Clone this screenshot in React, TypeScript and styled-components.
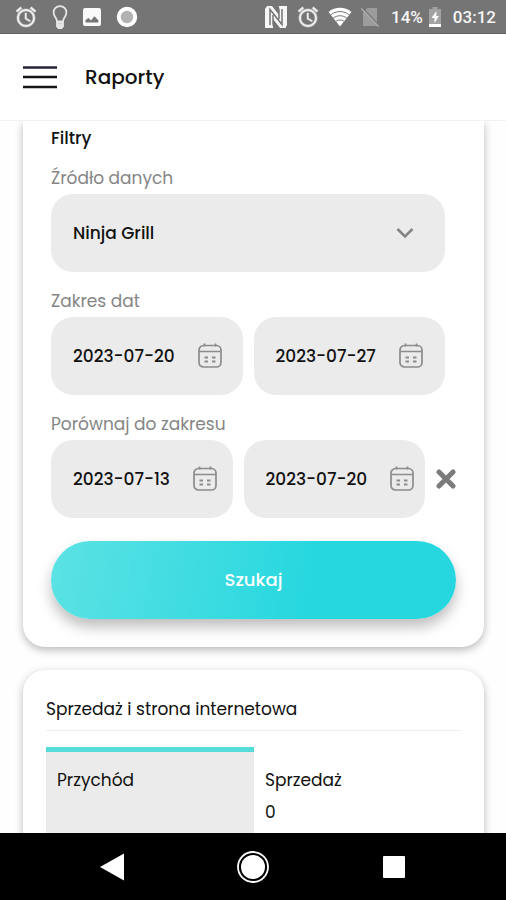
import React, { useState } from "react";
import styled, { createGlobalStyle } from "styled-components";

const GlobalStyle = createGlobalStyle`
  *, *::before, *::after { box-sizing: border-box; }
  body {
    margin: 0;
    background: #fefefe;
    color: #111;
    font-family: Poppins, Inter, "Liberation Sans", sans-serif;
    font-size: 17px;
    font-weight: 500;
    line-height: 24px;
  }
  button, input, select { font: inherit; color: inherit; }
`;

const Screen = styled.div`
  display: flex;
  flex-direction: column;
  height: 100vh;
`;

const StatusBar = styled.div`
  display: flex;
  flex: none;
  align-items: center;
  justify-content: space-between;
  height: 34px;
  padding: 0 10px 0 14px;
  background: #757575;
  border-bottom: 1px solid #636363;
  color: #f6f6f6;
  font-family: Roboto, sans-serif;
`;

const StatusGroup = styled.div<{ $gap: number }>`
  display: flex;
  align-items: center;
  gap: ${({ $gap }) => $gap}px;

  svg { display: block; flex: none; }
`;

const Header = styled.header`
  display: flex;
  flex: none;
  align-items: center;
  gap: 28px;
  height: 87px;
  padding: 0 23px;
  background: #fff;
  border-bottom: 1px solid #f2f2f2;
`;

const PageTitle = styled.h1`
  margin: 0;
  font-size: 20px;
  font-weight: 500;
`;

const IconButton = styled.button`
  display: flex;
  flex: none;
  align-items: center;
  justify-content: center;
  padding: 0;
  border: 0;
  background: none;
  cursor: pointer;

  svg { display: block; }
`;

const Content = styled.main`
  display: flex;
  flex: 1;
  flex-direction: column;
  gap: 23px;
  min-height: 0;
  padding: 0 22px 0 23px;
  overflow: hidden auto;
  scrollbar-width: none;
`;

const Card = styled.section`
  flex: none;
  border-radius: 22px;
  background: #fff;
  box-shadow: 0 3px 8px rgba(0, 0, 0, 0.28);
`;

const FilterCard = styled(Card)`
  padding: 5px 28px 28px;
  border-top-left-radius: 0;
  border-top-right-radius: 0;
`;

const ReportCard = styled(Card)`
  padding: 27px 22px 28px 23px;
`;

const FilterTitle = styled.h2`
  margin: 0 0 16px;
  font-size: 17px;
  font-weight: 500;
`;

const FieldGroup = styled.fieldset`
  min-width: 0;
  margin: 0 0 17px;
  padding: 0;
  border: 0;

  &:last-of-type { margin-bottom: 23px; }
`;

const caption = `
  display: block;
  margin-bottom: 4px;
  padding: 0;
  color: #858585;
  font-weight: 400;
`;
const Legend = styled.legend`${caption}`;
const Label = styled.label`${caption}`;

const FieldRow = styled.div<{ $inset?: boolean }>`
  display: flex;
  align-items: center;
  gap: 11px;
  padding-right: ${({ $inset }) => ($inset ? 11 : 0)}px;
`;

const SelectBox = styled.div`
  display: grid;
  flex: 1;
  align-items: center;
  height: 78px;
  border-radius: 22px;
  background: #ebebeb;

  > * { grid-area: 1 / 1; }
  svg {
    justify-self: end;
    margin-right: 30px;
    pointer-events: none;
  }
`;

const Select = styled.select`
  width: 100%;
  height: 100%;
  padding: 0 60px 0 22px;
  border: 0;
  border-radius: 22px;
  background: none;
  appearance: none;
`;

const DateBox = styled.div`
  display: flex;
  flex: 1 1 0;
  align-items: center;
  gap: 23px;
  min-width: 0;
  height: 78px;
  padding-left: 22px;
  border-radius: 22px;
  background: #ebebeb;
`;

const DateInput = styled.input`
  field-sizing: content;
  min-width: 0;
  padding: 0;
  border: 0;
  background: none;
`;

const SubmitButton = styled.button`
  display: block;
  width: 100%;
  height: 78px;
  border: 0;
  border-radius: 39px;
  background: linear-gradient(100deg, #5ce2e4 0%, #26d7df 65%);
  box-shadow: 0 8px 14px rgba(0, 0, 0, 0.26);
  color: #fff;
  font-size: 18px;
  cursor: pointer;
`;

const ReportTitle = styled.h2`
  margin: 0 0 16px;
  padding-bottom: 9px;
  border-bottom: 1px solid #efefef;
  font-size: 17px;
  font-weight: 400;
`;

const Metrics = styled.div`
  display: grid;
  grid-template-columns: 1fr 1fr;
`;

const Metric = styled.button<{ $active?: boolean }>`
  display: flex;
  flex-direction: column;
  gap: 8px;
  min-height: 108px;
  padding: 16px 11px;
  border: 0;
  border-top: 5px solid ${({ $active }) => ($active ? "#55dcd9" : "transparent")};
  background: ${({ $active }) => ($active ? "#ebebeb" : "none")};
  font-weight: 400;
  text-align: left;
  cursor: pointer;
`;

const NavBar = styled.nav`
  display: grid;
  flex: none;
  grid-template-columns: repeat(3, 1fr);
  height: 67px;
  padding: 0 42px;
  background: #000;
`;

const AlarmIcon = () => (
  <svg width="24" height="24" viewBox="0 0 24 24" fill="#ececec" stroke="#ececec" strokeWidth="0.5" aria-hidden="true">
    <path d="M22 5.72l-4.6-3.86-1.29 1.53 4.6 3.86L22 5.72zM7.88 3.39L6.6 1.86 2 5.71l1.29 1.53 4.59-3.85zM12.5 8H11v6l4.75 2.85.75-1.23-4-2.37V8zM12 4c-4.97 0-9 4.03-9 9s4.02 9 9 9c4.97 0 9-4.03 9-9s-4.03-9-9-9zm0 16c-3.87 0-7-3.13-7-7s3.13-7 7-7 7 3.13 7 7-3.13 7-7 7z" />
  </svg>
);

const BulbIcon = () => (
  <svg width="16" height="24" viewBox="0 0 16 24" fill="none" stroke="#e6e6e6" strokeWidth="1.8" aria-hidden="true">
    <path d="M5 16.5C5 13 1.6 11.5 1.6 7.5a6.4 6.4 0 0 1 12.8 0C14.4 11.500 11 13 11 16.500Z" />
    <path d="M5 17h6v4.500L9.500 23h-3L5 21.500ZM5 19.300h6M5.500 21.500h5" fill="#bbb" />
  </svg>
);

const PictureIcon = () => (
  <svg width="20" height="20" viewBox="0 0 20 20" aria-hidden="true">
    <rect x="1" y="1" width="18" height="18" rx="2" fill="#fafafa" />
    <path d="M3.500 15.500V13l3-2 2.500 2.600 3.400-4.400 3.900 4V15.500Z" fill="#757575" />
  </svg>
);

const RecordIcon = () => (
  <svg width="22" height="22" viewBox="0 0 22 22" aria-hidden="true">
    <circle cx="11" cy="11" r="8.200" fill="#b2b2b2" stroke="#fff" strokeWidth="4" />
  </svg>
);

const NfcIcon = () => (
  <svg width="24" height="24" viewBox="0 0 24 24" aria-hidden="true">
    <path d="M3 1h5l7 9V5l-1.500-4H23v19l-1.500 3H16L9 14v5l1.500 4H1V4Z" fill="#f7f7f7" />
    <path d="M6 20V4.500l12 15V4M10 23 9 19v-9M14 1l1 4v9" fill="none" stroke="#757575" strokeWidth="1.500" />
  </svg>
);

const WifiIcon = () => (
  <svg width="24" height="20" viewBox="0 0 24 20" aria-hidden="true">
    <path d="M12 19.500.5 5C7 -.6 17-.6 23.500 5Z" fill="#fff" />
    <path d="M2.500 8c5.500-4.600 13.500-4.600 19 0M5 11.300c4.200-3.400 9.800-3.400 14 0M7.600 14.500c2.800-2 6-2 8.800 0" fill="none" stroke="#757575" strokeWidth="1" />
  </svg>
);

const NoSimIcon = () => (
  <svg width="20" height="22" viewBox="0 0 20 22" aria-hidden="true">
    <path d="M7.500 2H17v18H3V6.500Z" fill="#9c9c9c" />
    <path d="M2 1.500 19 19.500" stroke="#757575" strokeWidth="1.500" />
    <path d="M1.200 2.500 18.500 20.500" stroke="#ababab" strokeWidth="1.500" />
  </svg>
);

const BatteryIcon = () => (
  <svg width="14" height="22" viewBox="0 0 14 22" aria-hidden="true">
    <path d="M4.500 1h5v2H13v18H1V3h3.500Z" fill="#a2a2a2" />
    <path d="M1 18h12v3H1Z" fill="#fff" />
    <path d="M8.300 5 3.500 12h3v5l4.500-7H8.300Z" fill="#fff" />
  </svg>
);

const MenuIcon = () => (
  <svg width="34" height="24" viewBox="0 0 34 24" fill="none" strokeWidth="2.500" aria-hidden="true">
    <path d="M0 2.500h34" stroke="#25253a" />
    <path d="M0 12h34M0 22h34" stroke="#151515" />
  </svg>
);

const ChevronIcon = () => (
  <svg width="20" height="20" viewBox="0 0 20 20" fill="none" stroke="#858585" strokeWidth="2.600" aria-hidden="true">
    <path d="m2.500 6 7.500 7.500L17.500 6" />
  </svg>
);

const CalendarIcon = () => (
  <svg width="24" height="26" viewBox="0 0 24 26" fill="none" stroke="#8c8c8c" strokeWidth="1.700" aria-hidden="true">
    <rect x="1" y="2.500" width="22" height="21.500" rx="4.500" />
    <path d="M1 8.500h22M6.500 .5v3M17.500 .5v3" />
    <path d="M6.500 14.500H10M14 14.500h3.500M6.500 18.500H10M14 18.500h3.500" strokeWidth="2" />
  </svg>
);

const CrossIcon = () => (
  <svg width="20" height="20" viewBox="0 0 20 20" stroke="#7b7b7b" strokeWidth="5" strokeLinecap="round" aria-hidden="true">
    <path d="m3 3 14 14M17 3 3 17" />
  </svg>
);

function DateField({ label, initial }: { label: string; initial: string }) {
  const [value, setValue] = useState(initial);
  return (
    <DateBox>
      <DateInput type="text" aria-label={label} value={value} onChange={(e) => setValue(e.target.value)} />
      <IconButton type="button" aria-label={`${label}: kalendarz`}>
        <CalendarIcon />
      </IconButton>
    </DateBox>
  );
}

export default function App() {
  const [comparing, setComparing] = useState(true);
  const [metric, setMetric] = useState("revenue");

  return (
    <>
      <GlobalStyle />
      <Screen>
        <StatusBar>
          <StatusGroup $gap={14}>
            <AlarmIcon />
            <BulbIcon />
            <PictureIcon />
            <RecordIcon />
          </StatusGroup>
          <StatusGroup $gap={11}>
            <StatusGroup $gap={8}>
              <NfcIcon />
              <AlarmIcon />
              <WifiIcon />
              <NoSimIcon />
            </StatusGroup>
            <StatusGroup $gap={5}>
              <span>14%</span>
              <BatteryIcon />
            </StatusGroup>
            <time>03:12</time>
          </StatusGroup>
        </StatusBar>

        <Header>
          <IconButton type="button" aria-label="Menu">
            <MenuIcon />
          </IconButton>
          <PageTitle>Raporty</PageTitle>
        </Header>

        <Content>
          <FilterCard as="form" onSubmit={(e: React.FormEvent) => e.preventDefault()}>
            <FilterTitle>Filtry</FilterTitle>

            <FieldGroup>
              <Label htmlFor="source">Źródło danych</Label>
              <FieldRow $inset>
                <SelectBox>
                  <Select id="source" defaultValue="Ninja Grill">
                    <option>Ninja Grill</option>
                  </Select>
                  <ChevronIcon />
                </SelectBox>
              </FieldRow>
            </FieldGroup>

            <FieldGroup>
              <Legend>Zakres dat</Legend>
              <FieldRow $inset>
                <DateField label="Zakres od" initial="2023-07-20" />
                <DateField label="Zakres do" initial="2023-07-27" />
              </FieldRow>
            </FieldGroup>

            {comparing && (
              <FieldGroup>
                <Legend>Porównaj do zakresu</Legend>
                <FieldRow>
                  <DateField label="Porównanie od" initial="2023-07-13" />
                  <DateField label="Porównanie do" initial="2023-07-20" />
                  <IconButton type="button" aria-label="Usuń porównanie" onClick={() => setComparing(false)}>
                    <CrossIcon />
                  </IconButton>
                </FieldRow>
              </FieldGroup>
            )}

            <SubmitButton type="submit">Szukaj</SubmitButton>
          </FilterCard>

          <ReportCard>
            <ReportTitle>Sprzedaż i strona internetowa</ReportTitle>
            <Metrics>
              <Metric type="button" $active={metric === "revenue"} onClick={() => setMetric("revenue")}>
                <span>Przychód</span>
              </Metric>
              <Metric type="button" $active={metric === "sales"} onClick={() => setMetric("sales")}>
                <span>Sprzedaż</span>
                <span>0</span>
              </Metric>
            </Metrics>
          </ReportCard>
        </Content>

        <NavBar aria-label="System">
          <IconButton type="button" aria-label="Wstecz">
            <svg width="26" height="30" viewBox="0 0 26 30" fill="#fff" aria-hidden="true">
              <path d="M25 1.500v27L1 15Z" />
            </svg>
          </IconButton>
          <IconButton type="button" aria-label="Ekran główny">
            <svg width="34" height="34" viewBox="0 0 34 34" fill="none" aria-hidden="true">
              <circle cx="17" cy="17" r="15" stroke="#fff" strokeWidth="1.800" />
              <circle cx="17" cy="17" r="12" fill="#fff" />
            </svg>
          </IconButton>
          <IconButton type="button" aria-label="Ostatnie aplikacje">
            <svg width="22" height="22" viewBox="0 0 22 22" aria-hidden="true">
              <rect width="22" height="22" rx="1" fill="#fff" />
            </svg>
          </IconButton>
        </NavBar>
      </Screen>
    </>
  );
}
